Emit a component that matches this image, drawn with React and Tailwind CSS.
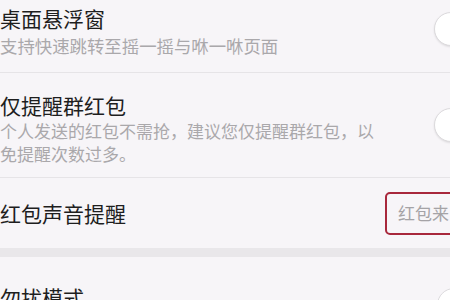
const font = { fontFamily: "'Noto Sans CJK SC', 'Noto Sans', sans-serif" }

function Knob({ top }) {
  return (
    <div className={top ? 'w-[16px] shrink-0 pt-[12px]' : 'w-[16px] shrink-0 self-center'}>
      <div className="w-[34px] h-[34px] rounded-full bg-white border-[1.5px] border-[#dcdadd] shadow-[0_1px_2px_rgba(0,0,0,0.1)]" />
    </div>
  )
}

export default function App() {
  return (
    <div className="w-[450px] h-[300px] overflow-hidden bg-[#f7f5f8]" style={font}>
      {/* 桌面悬浮窗 */}
      <div className="flex h-[73px] border-b border-[#e6e4e7]">
        <div className="flex-1 pt-[4px]">
          <div className="text-[21px] leading-[28px] text-[#1e1e1e]">桌面悬浮窗</div>
          <div className="text-[17.4px] leading-[24px] text-[#aaa8ab] mt-[2px]">支持快速跳转至摇一摇与咻一咻页面</div>
        </div>
        <Knob top />
      </div>

      {/* 仅提醒群红包 */}
      <div className="flex h-[105px] border-b border-[#e6e4e7]">
        <div className="flex-1 pt-[18px]">
          <div className="text-[21px] leading-[28px] text-[#1e1e1e]">仅提醒群红包</div>
          <div className="text-[17px] leading-[23px] text-[#aaa8ab] w-[380px]">个人发送的红包不需抢，建议您仅提醒群红包，以免提醒次数过多。</div>
        </div>
        <Knob />
      </div>

      {/* 红包声音提醒 */}
      <div className="flex items-center h-[70px]">
        <div className="flex-1 text-[21px] leading-[28px] text-[#1e1e1e]">红包声音提醒</div>
        <div className="w-[65px] shrink-0">
          <div className="w-[90px] h-[43px] rounded-[5px] border-2 border-[#a8283c] flex items-center pl-[11px] text-[17px] text-[#a5a3a6]">红包来</div>
        </div>
      </div>

      <div className="h-[9px] bg-[#e9e7ea]" />

      {/* 勿扰模式 */}
      <div className="flex h-[60px]">
        <div className="flex-1 pt-[26px] text-[21px] leading-[28px] text-[#1e1e1e]">勿扰模式</div>
        <div className="w-[13px] shrink-0 pt-[31px]">
          <div className="w-[34px] h-[34px] rounded-full bg-white border-[1.5px] border-[#dcdadd]" />
        </div>
      </div>
    </div>
  )
}
